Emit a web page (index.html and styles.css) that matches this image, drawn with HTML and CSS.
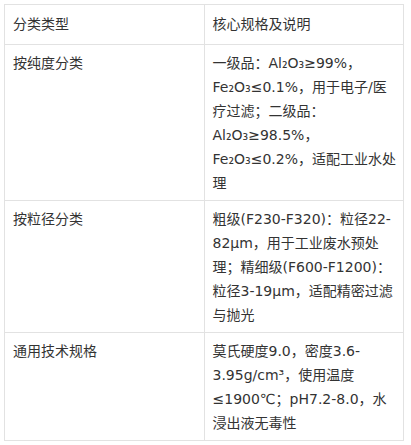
FILE: index.html
```html
<!DOCTYPE html>
<html lang="zh">
<head>
<meta charset="utf-8">
<link rel="stylesheet" href="styles.css">
</head>
<body>
<div class="wrap">
<table class="spec">
  <thead>
    <tr><th>分类类型</th><th>核心规格及说明</th></tr>
  </thead>
  <tbody>
    <tr><td>按纯度分类</td><td>一级品：Al₂O₃≥99%，Fe₂O₃≤0.1%，用于电子/医疗过滤；二级品：Al₂O₃≥98.5%，Fe₂O₃≤0.2%，适配工业水处理</td></tr>
    <tr><td>按粒径分类</td><td>粗级(F230-F320)：粒径22-82μm，用于工业废水预处理；精细级(F600-F1200)：粒径3-19μm，适配精密过滤与抛光</td></tr>
    <tr><td>通用技术规格</td><td>莫氏硬度9.0，密度3.6-3.95g/cm³，使用温度≤1900℃；pH7.2-8.0，水浸出液无毒性</td></tr>
  </tbody>
</table>
</div>
</body>
</html>
```

FILE: styles.css
```css
html, body {
  margin: 0;
  padding: 0;
  background: #fff;
}
.wrap {
  padding: 4px;
}
.spec {
  width: 400px;
  border-collapse: collapse;
  table-layout: fixed;
  font-family: "DejaVu Sans", "Noto Sans CJK SC", sans-serif;
  font-size: 14px;
  line-height: 24px;
  color: #333;
}
.spec th, .spec td {
  border: 1px solid #e2e2e2;
  text-align: left;
  vertical-align: top;
  font-weight: normal;
  width: 50%;
  word-break: normal;
  overflow-wrap: anywhere;
}
.spec th {
  padding: 7px 8px 8px;
}
.spec td {
  padding: 6px 7px 5px 8px;
}
```
